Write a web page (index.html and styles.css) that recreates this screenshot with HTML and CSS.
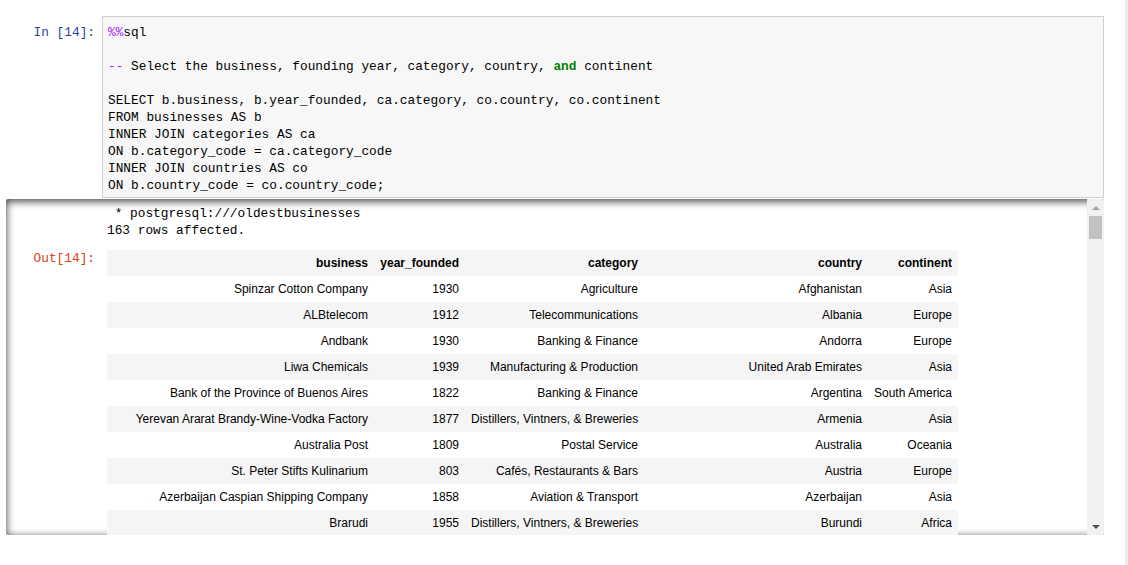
FILE: index.html
```html
<!DOCTYPE html>
<html>
<head>
<meta charset="utf-8">
<link rel="stylesheet" href="styles.css">
</head>
<body>
<div class="page">
  <div class="cell">
    <div class="input-row">
      <div class="prompt in-prompt">In&nbsp;[14]:</div>
      <pre class="code"><span class="magic">%%</span>sql

<span class="cmt">--</span> Select the business, founding year, category, country, <span class="kw">and</span> continent

SELECT b.business, b.year_founded, ca.category, co.country, co.continent
FROM businesses AS b
INNER JOIN categories AS ca
ON b.category_code = ca.category_code
INNER JOIN countries AS co
ON b.country_code = co.country_code;</pre>
    </div>
    <div class="out-scroll">
      <div class="out-body">
        <div class="out-row">
          <div class="prompt"></div>
          <pre class="stdout"> * postgresql:///oldestbusinesses
163 rows affected.</pre>
        </div>
        <div class="out-row">
          <div class="prompt out-prompt">Out[14]:</div>
          <div class="result">
            <table class="df">
              <colgroup>
                <col class="c1"><col class="c2"><col class="c3"><col class="c4"><col class="c5">
              </colgroup>
              <thead>
                <tr><th>business</th><th>year_founded</th><th>category</th><th>country</th><th>continent</th></tr>
              </thead>
              <tbody>
                <tr><td>Spinzar Cotton Company</td><td>1930</td><td>Agriculture</td><td>Afghanistan</td><td>Asia</td></tr>
                <tr><td>ALBtelecom</td><td>1912</td><td>Telecommunications</td><td>Albania</td><td>Europe</td></tr>
                <tr><td>Andbank</td><td>1930</td><td>Banking &amp; Finance</td><td>Andorra</td><td>Europe</td></tr>
                <tr><td>Liwa Chemicals</td><td>1939</td><td>Manufacturing &amp; Production</td><td>United Arab Emirates</td><td>Asia</td></tr>
                <tr><td>Bank of the Province of Buenos Aires</td><td>1822</td><td>Banking &amp; Finance</td><td>Argentina</td><td>South America</td></tr>
                <tr><td>Yerevan Ararat Brandy-Wine-Vodka Factory</td><td>1877</td><td>Distillers, Vintners, &amp; Breweries</td><td>Armenia</td><td>Asia</td></tr>
                <tr><td>Australia Post</td><td>1809</td><td>Postal Service</td><td>Australia</td><td>Oceania</td></tr>
                <tr><td>St. Peter Stifts Kulinarium</td><td>803</td><td>Cafés, Restaurants &amp; Bars</td><td>Austria</td><td>Europe</td></tr>
                <tr><td>Azerbaijan Caspian Shipping Company</td><td>1858</td><td>Aviation &amp; Transport</td><td>Azerbaijan</td><td>Asia</td></tr>
                <tr><td>Brarudi</td><td>1955</td><td>Distillers, Vintners, &amp; Breweries</td><td>Burundi</td><td>Africa</td></tr>
              </tbody>
            </table>
          </div>
        </div>
      </div>
      <div class="vscroll">
        <div class="sb-btn"><span class="arrow-up"></span></div>
        <div class="sb-track"><div class="sb-thumb"></div></div>
        <div class="sb-btn"><span class="arrow-down"></span></div>
      </div>
    </div>
  </div>
</div>
<div class="edge"></div>
</body>
</html>
```

FILE: styles.css
```css
html, body {
  margin: 0;
  padding: 0;
  background: #ffffff;
}

body {
  display: flex;
  width: 1128px;
  height: 565px;
  overflow: hidden;
}

.page {
  width: 1125px;
  flex: none;
}

.edge {
  width: 3px;
  flex: none;
  background: #ebebeb;
}

.cell {
  margin-left: 6px;
  margin-top: 16px;
  width: 1098px;
}

.input-row {
  display: flex;
}

.prompt {
  width: 96px;
  flex: none;
  box-sizing: border-box;
  padding-right: 7px;
  text-align: right;
  font-family: "Liberation Mono", monospace;
  font-size: 12.8px;
  line-height: 17px;
}

.in-prompt {
  color: #303f9f;
  padding-top: 8px;
}

.out-prompt {
  color: #d84315;
}

.code {
  flex: 1;
  margin: 0;
  box-sizing: border-box;
  height: 182px;
  border: 1px solid #cfcfcf;
  background: #f7f7f7;
  padding: 7px 5px 3px 5px;
  font-family: "Liberation Mono", monospace;
  font-size: 12.8px;
  line-height: 17px;
  color: #000000;
  white-space: pre;
}

.magic, .cmt {
  color: #aa22ff;
}

.kw {
  color: #008000;
  font-weight: bold;
}

.out-scroll {
  display: flex;
  height: 336px;
  margin-top: 1px;
  border-radius: 2px;
  box-shadow: inset 0 2px 8px rgba(0, 0, 0, 0.8);
  overflow: hidden;
}

.out-body {
  flex: 1;
  overflow: hidden;
  padding-top: 6px;
}

.out-row {
  display: flex;
}

.stdout {
  margin: 0;
  padding-left: 5px;
  font-family: "Liberation Mono", monospace;
  font-size: 12.8px;
  line-height: 17px;
  color: #000000;
  white-space: pre;
}

.result {
  padding-left: 5px;
  margin-top: 11px;
}

.out-row .out-prompt {
  margin-top: 11px;
}

.df {
  border-collapse: collapse;
  table-layout: fixed;
  width: 851px;
  font-family: "Liberation Sans", Arial, sans-serif;
  font-size: 12px;
  color: #000000;
}

.c1 { width: 267px; }
.c2 { width: 91px; }
.c3 { width: 179px; }
.c4 { width: 224px; }
.c5 { width: 90px; }

.df th, .df td {
  text-align: right;
  vertical-align: middle;
  padding: 6px 6px;
  line-height: 14px;
  height: 14px;
  white-space: nowrap;
  border: none;
}

.df th {
  font-weight: bold;
}

.df thead tr {
  background: #f5f5f5;
}

.df tbody tr:nth-child(even) {
  background: #f5f5f5;
}

.vscroll {
  width: 17px;
  flex: none;
  display: flex;
  flex-direction: column;
  background: #f1f1f1;
}

.sb-btn {
  height: 17px;
  flex: none;
  display: flex;
  align-items: center;
  justify-content: center;
}

.sb-track {
  flex: 1;
}

.sb-thumb {
  height: 23px;
  margin: 0 2px;
  background: #c1c1c1;
}

.arrow-up {
  width: 0;
  height: 0;
  border-left: 4px solid transparent;
  border-right: 4px solid transparent;
  border-bottom: 4px solid #a3a3a3;
}

.arrow-down {
  width: 0;
  height: 0;
  border-left: 4px solid transparent;
  border-right: 4px solid transparent;
  border-top: 4px solid #505050;
}
```
